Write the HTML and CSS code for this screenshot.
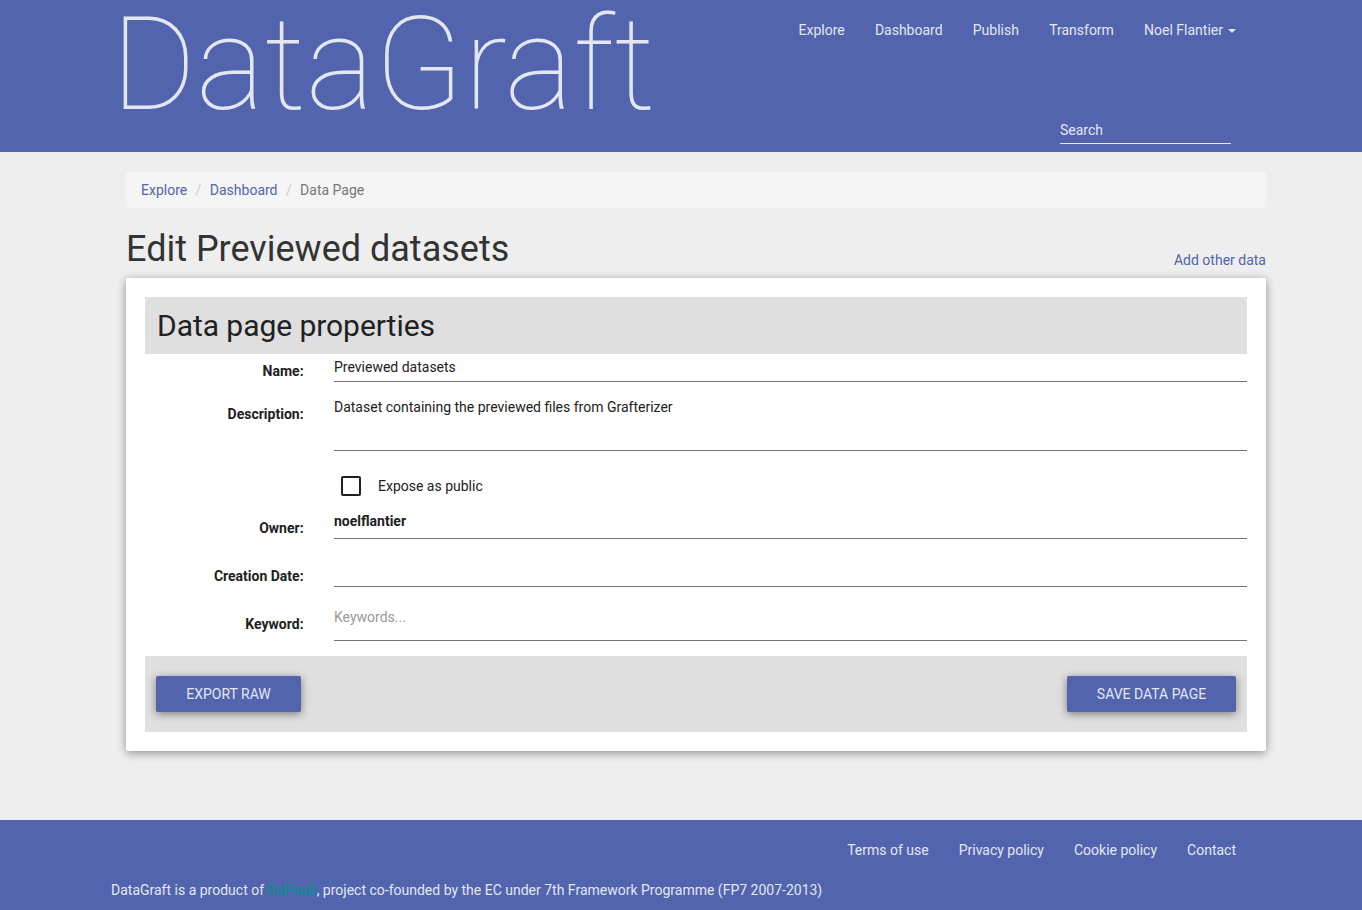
FILE: index.html
```html
<!DOCTYPE html>
<html lang="en">
<head>
<meta charset="utf-8">
<title>DataGraft</title>
<link rel="stylesheet" href="styles.css">
</head>
<body>
<header class="header">
  <div class="header-inner">
    <div class="logo">DataGraft</div>
    <div class="header-side">
      <nav class="nav">
        <a>Explore</a><a>Dashboard</a><a>Publish</a><a>Transform</a><a>Noel Flantier<span class="caret"></span></a>
      </nav>
      <div class="search">Search</div>
    </div>
  </div>
</header>
<main class="main">
  <div class="breadcrumb"><a>Explore</a><span class="sep">/</span><a>Dashboard</a><span class="sep">/</span><span class="current">Data Page</span></div>
  <div class="title-row">
    <h1 class="title">Edit Previewed datasets</h1>
    <a class="add">Add other data</a>
  </div>
  <section class="card">
    <h2 class="card-title">Data page properties</h2>
    <div class="row row-name"><div class="label">Name:</div><div class="value">Previewed datasets</div></div>
    <div class="row row-description"><div class="label">Description:</div><div class="value">Dataset containing the previewed files from Grafterizer</div></div>
    <div class="row-public"><span class="checkbox"></span><span>Expose as public</span></div>
    <div class="row row-owner"><div class="label">Owner:</div><div class="value">noelflantier</div></div>
    <div class="row row-date"><div class="label">Creation Date:</div><div class="value"></div></div>
    <div class="row row-keyword"><div class="label">Keyword:</div><div class="value">Keywords...</div></div>
    <div class="actions"><div class="button export">EXPORT RAW</div><div class="button save">SAVE DATA PAGE</div></div>
  </section>
</main>
<footer class="footer">
  <nav class="footer-nav"><a>Terms of use</a><a>Privacy policy</a><a>Cookie policy</a><a>Contact</a></nav>
  <p class="credit">DataGraft is a product of <a class="dapaas">DaPaaS</a>, project co-founded by the EC under 7th Framework Programme (FP7 2007-2013)</p>
</footer>
</body>
</html>
```
FILE: styles.css
```css
* { box-sizing: border-box; }
body {
  margin: 0;
  min-height: 910px;
  display: flex;
  flex-direction: column;
  background: #eee;
  color: #333;
  font: 14px/20px Roboto, sans-serif;
}
.header { height: 152px; background: #5264ae; color: #e3e6f3; }
.header-inner {
  width: 1140px;
  height: 152px;
  margin-left: 111px;
  display: flex;
  justify-content: space-between;
}
.logo { font-size: 130px; line-height: 130px; font-weight: 100; white-space: nowrap; }
.header-side { display: flex; flex-direction: column; align-items: flex-end; padding-top: 20px; }
.nav, .footer-nav { display: flex; gap: 30px; padding-right: 15px; }
.nav { gap: 30.2px; }
.caret {
  display: inline-block;
  margin-left: 5px;
  vertical-align: middle;
  border: 4px solid transparent;
  border-top-color: #e3e6f3;
  border-bottom: 0;
}
.search { width: 171px; height: 24px; margin: 80px 20px 0 0; border-bottom: 1px solid #e3e6f3; }
.main { width: 1140px; margin-left: 126px; padding-top: 20px; flex: 1; }
.breadcrumb {
  height: 36px;
  padding: 8px 15px;
  display: flex;
  background: #f5f5f5;
  border-radius: 4px;
}
.breadcrumb a, .add { color: #5264ae; }
.sep { width: 22.6px; text-align: center; color: #ccc; }
.current { color: #777; }
.title-row { height: 70px; display: flex; justify-content: space-between; align-items: flex-end; padding-bottom: 8px; }
.title { margin: 0; font-size: 36px; line-height: 42px; font-weight: 400; }
.card {
  height: 473px;
  padding: 19px;
  background: #fff;
  border-radius: 2px;
  color: #212121;
  box-shadow: 0 2px 10px rgba(0, 0, 0, .4);
}
.card-title { margin: 0; height: 57px; padding-left: 12px; background: #dfdfdf; font-size: 30px; line-height: 57px; font-weight: 400; letter-spacing: -.05px; }
.row { display: grid; grid-template-columns: 158.6px 913px; column-gap: 30.4px; }
.label { text-align: right; font-weight: 700; }
.value { border-bottom: 1px solid #757575; }
.row-name { height: 28px; }
.row-name .label { padding-top: 7px; }
.row-name .value { padding-top: 3px; }
.row-description { height: 69px; }
.row-description .label { padding-top: 22px; }
.row-description .value { padding-top: 15px; }
.row-public { height: 59px; padding: 25px 0 0 196px; display: flex; gap: 17px; }
.checkbox { width: 20px; height: 20px; border: 2px solid #212121; border-radius: 2px; }
.row-owner { height: 29px; }
.row-owner .label { padding-top: 8px; }
.row-owner .value { padding-top: 1px; font-weight: 700; }
.row-date { height: 48px; }
.row-date .label { padding-top: 27px; }
.row-keyword { height: 54px; }
.row-keyword .label { padding-top: 27px; }
.row-keyword .value { padding-top: 20px; color: #999; }
.actions { height: 76px; margin-top: 15px; padding: 20px 11px; display: flex; justify-content: space-between; background: #dfdfdf; }
.button {
  height: 36px;
  line-height: 36px;
  text-align: center;
  background: #5264ae;
  color: #e3e6f3;
  border-radius: 2px;
  box-shadow: 0 2px 9px rgba(0, 0, 0, .45);
}
.export { width: 145px; }
.save { width: 169px; }
.footer { height: 90px; padding: 20px 111px 0; background: #5264ae; color: #e3e6f3; }
.footer-nav { justify-content: flex-end; }
.credit { margin: 20px 0 0; }
.dapaas { color: #009688; }
```
